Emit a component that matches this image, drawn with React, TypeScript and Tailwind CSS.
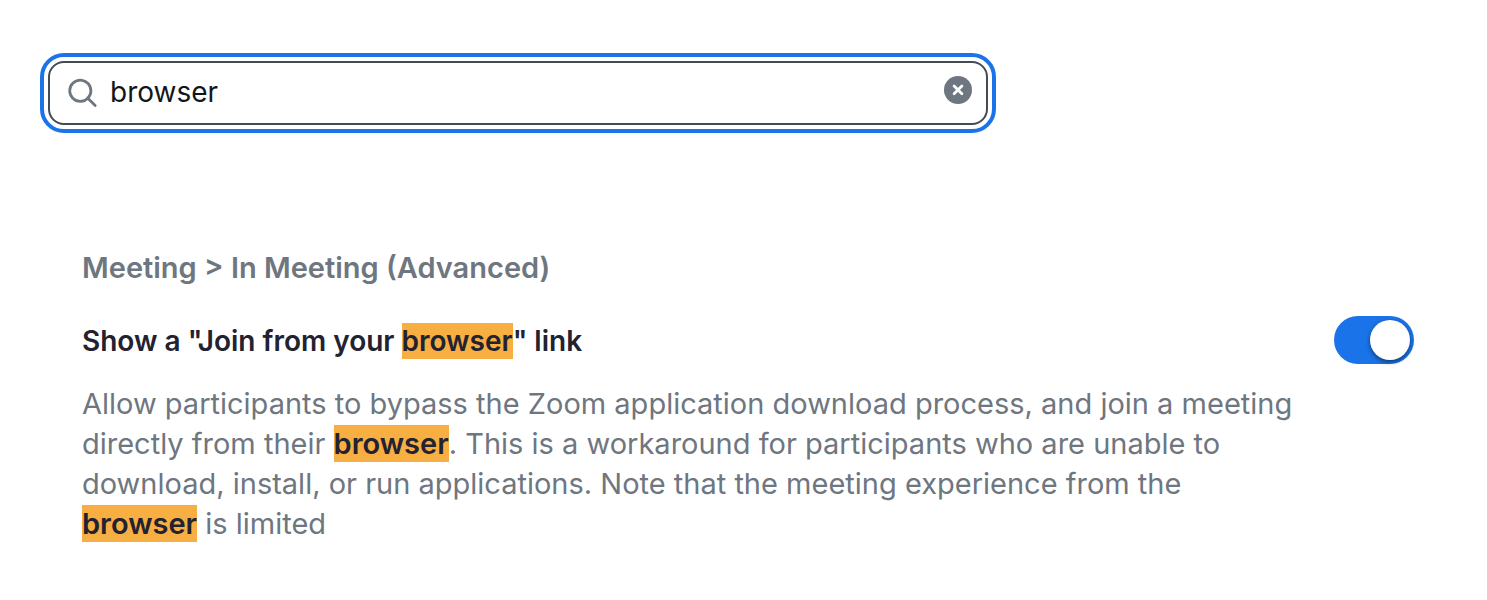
import { useState } from "react";

function Mark({ children }: { children: string }) {
  return <mark className="bg-[#f7ae43] py-px font-semibold text-[#222230]">{children}</mark>;
}

export default function App() {
  const [query, setQuery] = useState("browser");
  const [enabled, setEnabled] = useState(true);
  return (
    <main className="min-h-screen bg-white px-10 py-[53px] font-['Inter','Liberation_Sans',sans-serif]">
      <form
        role="search"
        onSubmit={(e) => e.preventDefault()}
        className="max-w-[956px] rounded-3xl border-4 border-[#1a73e8] p-1"
      >
        <div className="flex h-16 items-center gap-3 rounded-2xl border-2 border-[#444b53] pr-3.5 pl-4">
          <svg className="size-8 shrink-0" viewBox="0 0 32 32" fill="none" stroke="#6e7680" strokeWidth="2.8" strokeLinecap="round" aria-hidden="true">
            <circle cx="14.3" cy="13.8" r="10.6" />
            <path d="M21.8 21.3l7.4 7.2" />
          </svg>
          <input
            type="text"
            aria-label="Search settings"
            value={query}
            onChange={(e) => setQuery(e.target.value)}
            className="min-w-0 flex-1 pb-0.5 text-[28px] leading-10 text-[#131619] outline-none"
          />
          <button type="button" aria-label="Clear search" onClick={() => setQuery("")} className="shrink-0 pb-1.5">
            <svg className="size-7" viewBox="0 0 28 28" fill="none" aria-hidden="true">
              <circle cx="14" cy="14" r="14" fill="#6e7680" />
              <path d="M10.1 9.9l7.8 7.8M17.9 9.9l-7.8 7.8" stroke="#fff" strokeWidth="2.8" strokeLinecap="round" />
            </svg>
          </button>
        </div>
      </form>
      <section className="mt-[115px] pr-[33px] pl-[42px]">
        <p className="text-[29px] leading-10 font-semibold text-[#6e7680]">Meeting &gt; In Meeting (Advanced)</p>
        <div className="mt-7 flex items-start justify-between gap-10">
          <div className="max-w-[1212px]">
            <h2 id="join-label" className="pt-[5px] text-[28px] leading-10 font-semibold text-[#222230]">
              Show a "Join from your <Mark>browser</Mark>" link
            </h2>
            <p id="join-description" className="mt-[23px] text-[29px] leading-10 text-[#6e7680]">
              Allow participants to bypass the Zoom application download process, and join a meeting directly from their{" "}
              <Mark>browser</Mark>. This is a workaround for participants who are unable to download, install, or run
              applications. Note that the meeting experience from the <Mark>browser</Mark> is limited
            </p>
          </div>
          <button
            type="button"
            role="switch"
            aria-checked={enabled}
            aria-labelledby="join-label"
            aria-describedby="join-description"
            onClick={() => setEnabled(!enabled)}
            className={`flex h-12 w-20 shrink-0 items-center rounded-full p-1 ${enabled ? "justify-end bg-[#1a73e8]" : "justify-start bg-[#8a929c]"}`}
          >
            <span className="size-10 rounded-full bg-white shadow-[0_2px_4px_rgba(0,0,0,0.5)]" />
          </button>
        </div>
      </section>
    </main>
  );
}
